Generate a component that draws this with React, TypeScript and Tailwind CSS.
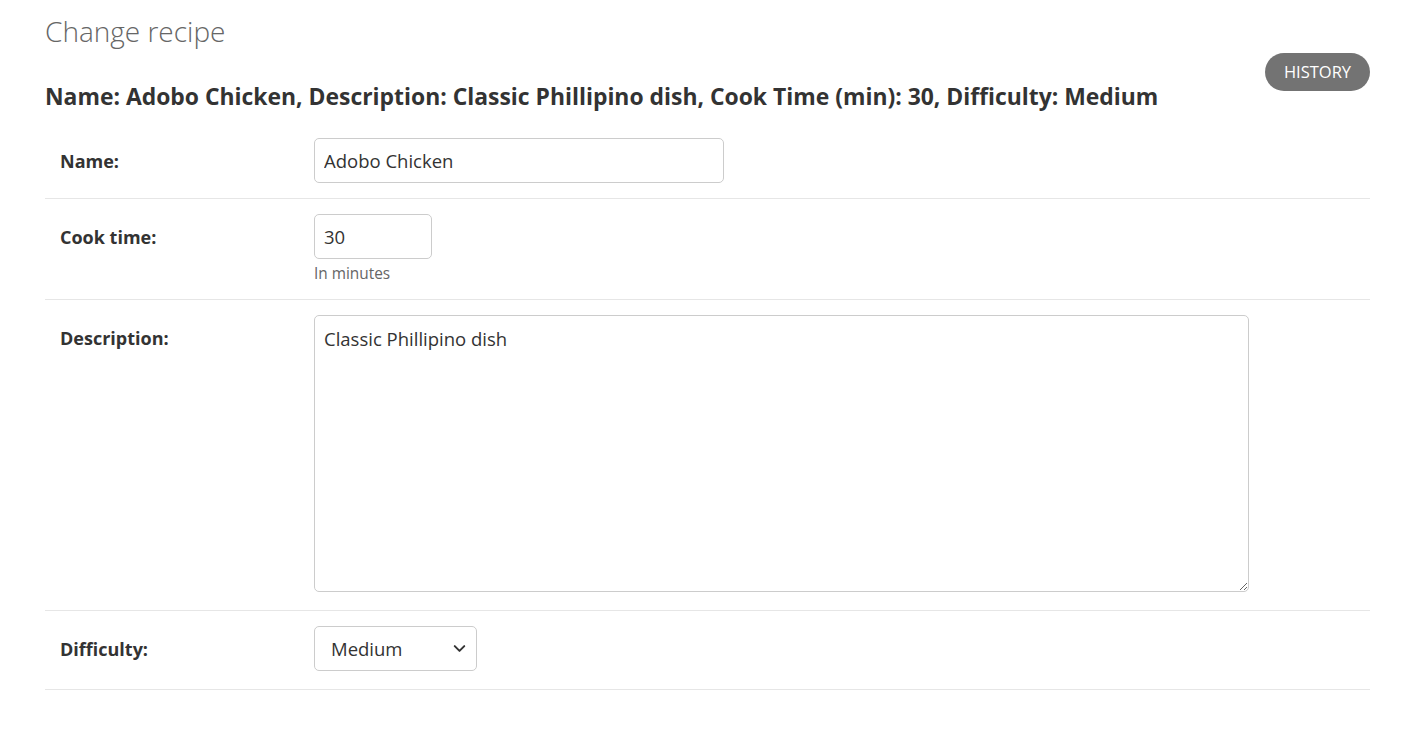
import { ChevronDown } from 'lucide-react'

const font = { fontFamily: '"Open Sans", "Noto Sans", sans-serif' }

function FormRow({ label, children, tall }: { label: string; children: React.ReactNode; tall?: boolean }) {
  return (
    <div className={`flex border-b border-[#e6e6e6] pt-[15px] ${tall ? 'pb-[18px]' : 'pb-[15px]'}`}>
      <label className="w-[269px] shrink-0 pl-[15px] pt-[11px] text-[18px] font-bold leading-[24px] text-[#333]">{label}</label>
      <div className="flex-1">{children}</div>
    </div>
  )
}

export default function App() {
  return (
    <div className="min-h-[729px] bg-white pl-[45px] pr-[35px] pt-[11px] text-[#333]" style={font}>
      <h1 className="text-[28px] font-light leading-[40px] text-[#666]">Change recipe</h1>
      <div className="flex items-start justify-between">
        <h2 className="mt-[31px] text-[22.9px] font-bold leading-[30px] text-[#333]">
          Name: Adobo Chicken, Description: Classic Phillipino dish, Cook Time (min): 30, Difficulty: Medium
        </h2>
        <button className="mt-[2px] h-[38px] w-[105px] rounded-full bg-[#737373] text-[16.5px] uppercase text-white">
          History
        </button>
      </div>
      <div className="mt-[11px]">
        <FormRow label="Name:">
          <input
            defaultValue="Adobo Chicken"
            className="h-[45px] w-[410px] rounded-[5px] border border-[#ccc] px-[9px] text-[18.5px] text-[#333] outline-none"
          />
        </FormRow>
        <FormRow label="Cook time:">
          <input
            defaultValue="30"
            className="h-[45px] w-[118px] rounded-[5px] border border-[#ccc] px-[9px] text-[18.5px] text-[#333] outline-none"
          />
          <div className="mt-[4px] text-[15.4px] leading-[21px] text-[#666]">In minutes</div>
        </FormRow>
        <FormRow label="Description:" tall>
          <textarea
            defaultValue="Classic Phillipino dish"
            className="block h-[277px] w-[935px] rounded-[5px] border border-[#ccc] px-[9px] py-[10px] text-[18.5px] leading-[26px] text-[#333] outline-none"
          />
        </FormRow>
        <FormRow label="Difficulty:" tall>
          <div className="relative h-[45px] w-[163px] rounded-[5px] border border-[#ccc]">
            <span className="absolute left-[16px] top-[9px] text-[18.5px] leading-[26px] text-[#333]">Medium</span>
            <ChevronDown className="absolute right-[7px] top-[12px] h-[19px] w-[19px] text-[#333]" strokeWidth={2.5} />
          </div>
        </FormRow>
      </div>
    </div>
  )
}
